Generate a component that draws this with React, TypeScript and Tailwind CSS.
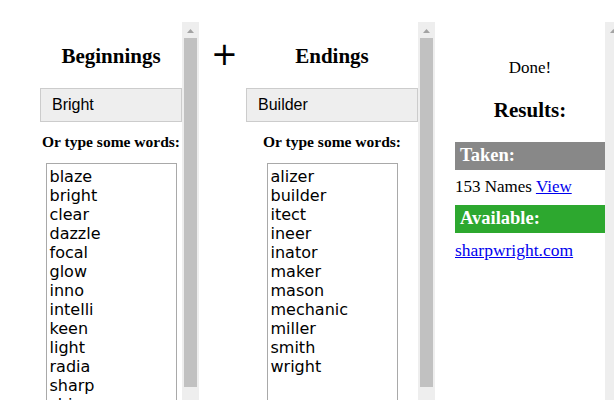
import React from 'react';

const beginnings = ['blaze', 'bright', 'clear', 'dazzle', 'focal', 'glow', 'inno', 'intelli', 'keen', 'light', 'radia', 'sharp', 'shine', 'spark', 'vivid'];
const endings = ['alizer', 'builder', 'itect', 'ineer', 'inator', 'maker', 'mason', 'mechanic', 'miller', 'smith', 'wright'];

const serif = "font-['Liberation_Serif',serif]";

// classic grey scrollbar strip (drawn, since the browser hides real ones)
const ScrollStrip: React.FC<{ thumb?: boolean }> = ({ thumb = true }) => (
  <div className="w-[17px] h-full shrink-0 bg-[#eee] flex flex-col items-center">
    <div className="h-[16px] w-full flex items-center justify-center pt-[1px]">
      <svg width="7" height="4" viewBox="0 0 7 4">
        <polygon points="3.5,0 7,4 0,4" fill="#a3a3a3" />
      </svg>
    </div>
    {thumb && <div className="w-[13px] h-[349px] bg-[#c1c1c1]" />}
  </div>
);

interface WordColumnProps {
  title: string;
  picked: string;
  words: string[];
  width: string;
}

const WordColumn: React.FC<WordColumnProps> = ({ title, picked, words, width }) => (
  <div className={`${width} flex flex-col items-stretch`}>
    <h3 className={`${serif} text-center text-[21px] font-bold leading-[22px] pt-[23px] text-black`}>{title}</h3>
    <div className="mt-[21px] h-[34px] border border-[#ccc] bg-[#eee] pl-[11px] flex items-center font-['Liberation_Sans',sans-serif] text-[16px] text-black">
      {picked}
    </div>
    <p className={`${serif} mt-[11px] text-center text-[15.5px] font-bold leading-[18px] text-black whitespace-nowrap`}>Or type some words:</p>
    <textarea
      readOnly
      value={words.join('\n')}
      className="mx-auto mt-[12px] block w-[131px] h-[330px] shrink-0 resize-none border border-[#a9a9a9] bg-white px-[3px] pt-[3px] pb-[2px] font-['DejaVu_Sans',sans-serif] text-[16px] leading-[19px] text-black outline-none overflow-hidden"
    />
  </div>
);

export default function App() {
  return (
    <div className="w-[614px] h-[400px] overflow-hidden bg-white flex items-start">
      {/* Beginnings */}
      <div className="mt-[22px] w-[199px] h-[440px] shrink-0 flex overflow-hidden">
        <div className="w-[182px] shrink-0 pl-[40px]">
          <WordColumn title="Beginnings" picked="Bright" words={beginnings} width="w-[142px]" />
        </div>
        <ScrollStrip />
      </div>

      {/* Plus */}
      <div className="w-[47px] shrink-0 pt-[38px] pl-[12px] font-['DejaVu_Sans',sans-serif] text-[32px] leading-[32px] text-black">+</div>

      {/* Endings */}
      <div className="mt-[22px] w-[190px] h-[440px] shrink-0 flex overflow-hidden">
        <div className="w-[172px] shrink-0">
          <WordColumn title="Endings" picked="Builder" words={endings} width="w-[172px]" />
        </div>
        <ScrollStrip />
      </div>

      {/* Results */}
      <div className="mt-[22px] w-[186px] h-[440px] shrink-0 flex overflow-hidden">
        <div className={`${serif} w-[169px] shrink-0 pl-[19px] text-black`}>
          <div className="w-[150px]">
            <p className="text-center text-[17px] leading-[20px] pt-[36px]">Done!</p>
            <h3 className="text-center text-[21px] font-bold leading-[22px] mt-[21px]">Results:</h3>
            <div className="mt-[21px] h-[28px] bg-[#888] pl-[5px] flex items-center text-[18.5px] font-bold text-white">Taken:</div>
            <p className="mt-[7px] text-[17px] leading-[20px]">
              153 Names <a href="#" className="text-[#0000ee] underline">View</a>
            </p>
            <div className="mt-[8px] h-[28px] bg-[#2da82f] pl-[5px] flex items-center text-[18.5px] font-bold text-white">Available:</div>
            <p className="mt-[7px] text-[17.5px] leading-[20px]">
              <a href="#" className="text-[#0000ee] underline">sharpwright.com</a>
            </p>
          </div>
        </div>
        <ScrollStrip thumb={false} />
      </div>
    </div>
  );
}
